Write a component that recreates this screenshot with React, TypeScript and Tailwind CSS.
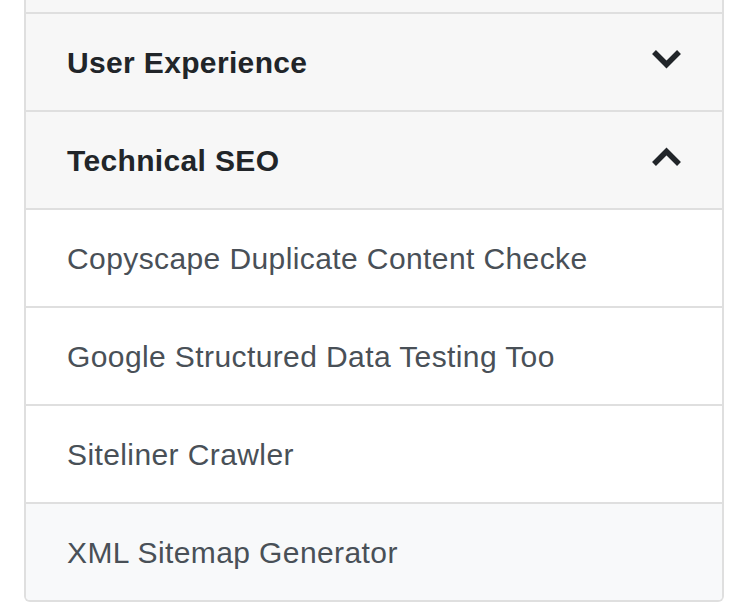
const sections = [
  { title: 'User Experience', open: false, items: [] as string[] },
  {
    title: 'Technical SEO',
    open: true,
    items: [
      'Copyscape Duplicate Content Checke',
      'Google Structured Data Testing Too',
      'Siteliner Crawler',
      'XML Sitemap Generator',
    ],
  },
]

const Chevron = ({ up }: { up: boolean }) => (
  <svg width="31" height="20" viewBox="0 0 31 20" className="-mt-[7px] text-[#212529]" aria-hidden>
    <polyline
      points={up ? '3,17 15.5,4.5 28,17' : '3,3 15.5,15.5 28,3'}
      fill="none"
      stroke="currentColor"
      strokeWidth="5.5"
      strokeLinejoin="miter"
    />
  </svg>
)

export default function App() {
  return (
    <div className="min-h-[616px] bg-white pl-6 pr-5 font-['Liberation_Sans',Arial,sans-serif]">
      <div className="-mt-px overflow-hidden rounded-b-md border-2 border-t-0 border-[#dfdfdf]">
        <div className="h-[13px] bg-[#f7f7f7]" />
        {sections.map((section) => (
          <div key={section.title}>
            <div className="flex h-[98px] items-center justify-between border-t-2 border-[#dfdfdf] bg-[#f7f7f7] pl-[41px] pr-[40px]">
              <span className="text-[30px] font-bold tracking-[0.35px] text-[#212529]">{section.title}</span>
              <Chevron up={section.open} />
            </div>
            {section.open &&
              section.items.map((item, i) => (
                <div
                  key={item}
                  className={`flex h-[98px] items-center border-t-2 border-[#dfdfdf] pl-[41px] text-[30px] tracking-[0.4px] text-[#495057] ${
                    i === section.items.length - 1 ? 'bg-[#f8f9fa]' : 'bg-white'
                  }`}
                >
                  {item}
                </div>
              ))}
          </div>
        ))}
      </div>
    </div>
  )
}
